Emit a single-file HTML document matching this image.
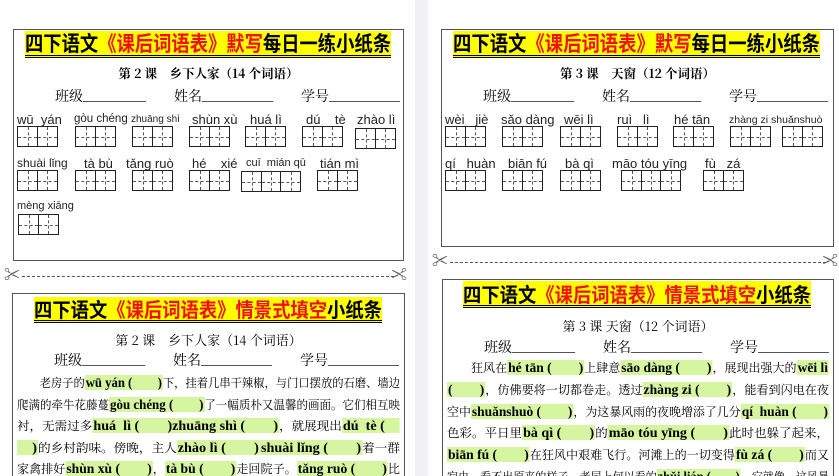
<!DOCTYPE html>
<html style="height:476px;overflow:hidden"><head><meta charset="utf-8">
<style>
*{margin:0;padding:0;box-sizing:border-box}
body{width:839px;height:476px;overflow:hidden;background:#fff;position:relative;font-family:"Liberation Serif","Noto Serif CJK SC",serif}
.a{position:absolute}
.box{position:absolute;border:1.5px solid #555}
.title{position:absolute;background:#ffff00;font-family:"Noto Sans CJK SC",sans-serif;font-weight:bold;white-space:nowrap;border-bottom:3px double #000;line-height:1;overflow:hidden}
.title span.t{display:inline-block;transform-origin:0 0}
.r{color:#f01010}
.sub{position:absolute;font-size:12.5px;white-space:nowrap;font-weight:bold;text-align:center;font-family:"Noto Serif CJK SC",serif}
.cls{position:absolute;font-size:14px;white-space:nowrap;font-family:"Noto Serif CJK SC",serif}
.py{position:absolute;font-family:"Liberation Sans",sans-serif;font-size:13px;white-space:nowrap;color:#222;line-height:1}
.g{position:absolute;display:flex;height:21px}
.g i{display:block;width:21px;height:21px;border:1.3px solid #222;margin-left:-1.3px;position:relative;background:#fff}
.g i:first-child{margin-left:0}
.g i:before{content:"";position:absolute;left:0;right:0;top:50%;border-top:1px dashed #555}
.g i:after{content:"";position:absolute;top:0;bottom:0;left:50%;border-left:1px dashed #555}
.cut{position:absolute;border-top:1.5px dashed #555;height:0}
.sc{position:absolute;font-size:16px;color:#555;line-height:1}
.ln{position:absolute;font-size:12px;white-space:nowrap;font-family:"Noto Serif CJK SC",serif;line-height:21px;height:21px;overflow:visible}
.ln .t{display:inline-block;transform-origin:0 0;white-space:nowrap}
.h{background:#d6f5a0;font-family:"Liberation Serif",serif;font-weight:bold;font-size:13.5px;padding:0 1px}
</style></head><body>
<div class="a" style="left:415px;top:0;width:13px;height:476px;background:#f0f1f5"></div>

<!-- TOP LEFT -->
<div class="box" style="left:13px;top:29px;width:391px;height:232px"></div>
<div class="title" style="left:25px;top:31px;width:366px;height:27px;font-size:21px;padding-top:2px"><span class="t">四下语文<span class="r">《课后词语表》默写</span>每日一练小纸条</span></div>
<div class="sub" style="left:13px;top:64px;width:391px">第 2 课　乡下人家（14 个词语）</div>
<div class="cls" style="left:55px;top:86px">班级________　　姓名_________　　学号_________</div>

<div class="py" style="left:17px;top:113px">wū&nbsp; yán</div><div class="g" style="left:17px;top:126px"><i></i><i></i></div>
<div class="py" style="left:74px;top:114px;font-size:11.5px">gòu chéng</div><div class="g" style="left:75px;top:126px"><i></i><i></i></div>
<div class="py" style="left:131px;top:115px;font-size:10px">zhuāng shì</div><div class="g" style="left:132px;top:126px"><i></i><i></i></div>
<div class="py" style="left:192px;top:113px">shùn xù</div><div class="g" style="left:189px;top:126px"><i></i><i></i></div>
<div class="py" style="left:250px;top:113px">huá lì</div><div class="g" style="left:245px;top:126px"><i></i><i></i></div>
<div class="py" style="left:306px;top:113px">dú&nbsp;&nbsp;&nbsp; tè</div><div class="g" style="left:302px;top:126px"><i></i><i></i></div>
<div class="py" style="left:357px;top:113px">zhào lì</div><div class="g" style="left:355px;top:128px"><i></i><i></i></div>

<div class="py" style="left:17px;top:157px;font-size:12px">shuài lǐng</div><div class="g" style="left:17px;top:170px"><i></i><i></i></div>
<div class="py" style="left:84px;top:157px">tà bù</div><div class="g" style="left:75px;top:170px"><i></i><i></i></div>
<div class="py" style="left:126px;top:157px">tǎng ruò</div><div class="g" style="left:132px;top:170px"><i></i><i></i></div>
<div class="py" style="left:192px;top:157px">hé&nbsp;&nbsp;&nbsp; xié</div><div class="g" style="left:189px;top:170px"><i></i><i></i></div>
<div class="py" style="left:246px;top:158px;font-size:11px">cuī&nbsp; mián qū</div><div class="g" style="left:241px;top:171px"><i></i><i></i><i></i></div>
<div class="py" style="left:320px;top:157px">tián mì</div><div class="g" style="left:317px;top:170px"><i></i><i></i></div>

<div class="py" style="left:17px;top:201px;font-size:11px">mèng xiāng</div><div class="g" style="left:18px;top:214px"><i></i><i></i></div>

<!-- TOP RIGHT -->
<div class="box" style="left:441px;top:29px;width:393px;height:218px"></div>
<div class="title" style="left:453px;top:31px;width:367px;height:27px;font-size:21px;padding-top:2px"><span class="t">四下语文<span class="r">《课后词语表》默写</span>每日一练小纸条</span></div>
<div class="sub" style="left:441px;top:64px;width:393px">第 3 课　天窗（12 个词语）</div>
<div class="cls" style="left:483px;top:86px">班级________　　姓名_________　　学号_________</div>

<div class="py" style="left:445px;top:113px">wèi&nbsp;&nbsp; jiè</div><div class="g" style="left:445px;top:126px"><i></i><i></i></div>
<div class="py" style="left:501px;top:113px">sǎo dàng</div><div class="g" style="left:502px;top:126px"><i></i><i></i></div>
<div class="py" style="left:564px;top:113px">wēi lì</div><div class="g" style="left:560px;top:126px"><i></i><i></i></div>
<div class="py" style="left:617px;top:113px">ruì&nbsp;&nbsp; lì</div><div class="g" style="left:617px;top:126px"><i></i><i></i></div>
<div class="py" style="left:674px;top:113px">hé tān</div><div class="g" style="left:673px;top:126px"><i></i><i></i></div>
<div class="py" style="left:729px;top:115px;font-size:10.5px">zhàng zi shuǎnshuò</div><div class="g" style="left:730px;top:126px"><i></i><i></i></div>
<div class="g" style="left:782px;top:126px"><i></i><i></i></div>

<div class="py" style="left:445px;top:157px">qí&nbsp;&nbsp; huàn</div><div class="g" style="left:445px;top:170px"><i></i><i></i></div>
<div class="py" style="left:508px;top:157px">biān fú</div><div class="g" style="left:502px;top:170px"><i></i><i></i></div>
<div class="py" style="left:565px;top:157px">bà qì</div><div class="g" style="left:560px;top:170px"><i></i><i></i></div>
<div class="py" style="left:612px;top:157px">māo tóu yīng</div><div class="g" style="left:621px;top:170px"><i></i><i></i><i></i></div>
<div class="py" style="left:705px;top:157px">fù&nbsp;&nbsp; zá</div><div class="g" style="left:703px;top:170px"><i></i><i></i></div>

<!-- CUT LINES -->
<div class="cut" style="left:22px;top:276px;width:372px"></div>
<div class="sc" style="left:4px;top:268px">✂</div><div class="sc" style="left:391px;top:268px;transform:scaleX(-1)">✂</div>
<div class="cut" style="left:450px;top:262px;width:376px"></div>
<div class="sc" style="left:432px;top:254px">✂</div><div class="sc" style="left:822px;top:254px;transform:scaleX(-1)">✂</div>

<!-- BOTTOM LEFT -->
<div class="box" style="left:12px;top:293px;width:393px;height:190px;border-bottom:none"></div>
<div class="title" style="left:34px;top:297px;width:348px;height:26px;font-size:20px;padding-top:2px"><span class="t">四下语文<span class="r">《课后词语表》情景式填空</span>小纸条</span></div>
<div class="sub" style="left:12px;top:330px;width:393px;font-weight:normal;font-size:13px">第 2 课　乡下人家（14 个词语）</div>
<div class="cls" style="left:54px;top:350px">班级________　　姓名_________　　学号_________</div>
<div class="ln" style="left:17px;top:372px;width:383px"><span class="t">　　老房子的<span class="h">wū yán (　　)</span>下，挂着几串干辣椒，与门口摆放的石磨、墙边</span></div>
<div class="ln" style="left:17px;top:394px;width:383px"><span class="t">爬满的牵牛花藤蔓<span class="h">gòu chéng (　　)</span>了一幅质朴又温馨的画面。它们相互映</span></div>
<div class="ln" style="left:17px;top:415px;width:383px"><span class="t">衬，无需过多<span class="h">huá&nbsp; lì (　　)zhuāng shì (　　)</span>，就展现出<span class="h">dú&nbsp; tè (　</span></span></div>
<div class="ln" style="left:17px;top:437px;width:383px"><span class="t"><span class="h">　)</span>的乡村韵味。傍晚，主人<span class="h">zhào lì (　　)</span><span class="h">shuài lǐng (　　)</span>着一群</span></div>
<div class="ln" style="left:17px;top:458px;width:383px"><span class="t">家禽排好<span class="h">shùn xù (　　)</span>，<span class="h">tà bù (　　)</span>走回院子。<span class="h">tǎng ruò (　　)</span>比</span></div>

<!-- BOTTOM RIGHT -->
<div class="box" style="left:442px;top:279px;width:392px;height:204px;border-bottom:none"></div>
<div class="title" style="left:463px;top:281px;width:348px;height:27px;font-size:20px;padding-top:3px"><span class="t">四下语文<span class="r">《课后词语表》情景式填空</span>小纸条</span></div>
<div class="sub" style="left:442px;top:316px;width:392px;font-weight:normal;font-size:13px">第 3 课 天窗（12 个词语）</div>
<div class="cls" style="left:484px;top:337px">班级________　　姓名_________　　学号_________</div>
<div class="ln" style="left:447px;top:357px;width:382px"><span class="t">　　狂风在<span class="h">hé tān (　　)</span>上肆意<span class="h">sāo dàng (　　)</span>，展现出强大的<span class="h">wēi lì</span></span></div>
<div class="ln" style="left:447px;top:379px;width:382px"><span class="t"><span class="h">(　　)</span>，仿佛要将一切都卷走。透过<span class="h">zhàng zi (　　)</span>，能看到闪电在夜</span></div>
<div class="ln" style="left:447px;top:401px;width:382px"><span class="t">空中<span class="h">shuǎnshuò (　　)</span>，为这暴风雨的夜晚增添了几分<span class="h">qí&nbsp; huàn (　　)</span></span></div>
<div class="ln" style="left:447px;top:422px;width:382px"><span class="t">色彩。平日里<span class="h">bà qì (　　)</span>的<span class="h">māo tóu yīng (　　)</span>此时也躲了起来，</span></div>
<div class="ln" style="left:447px;top:444px;width:382px"><span class="t"><span class="h">biān fú (　　)</span>在狂风中艰难飞行。河滩上的一切变得<span class="h">fù zá (　　)</span>而又</span></div>
<div class="ln" style="left:447px;top:466px;width:382px"><span class="t">寂虫，看不出原来的样子。老屋上何以看的<span class="h">zhǔi lián (　　)</span>，它就像，这风暴</span></div>
<script>
document.querySelectorAll('.title,.ln').forEach(function(t){
  var s=t.querySelector('.t');var w=s.getBoundingClientRect().width;var W=t.clientWidth;
  s.style.transform='scaleX('+(W/w)+')';
});
</script>
</body></html>
